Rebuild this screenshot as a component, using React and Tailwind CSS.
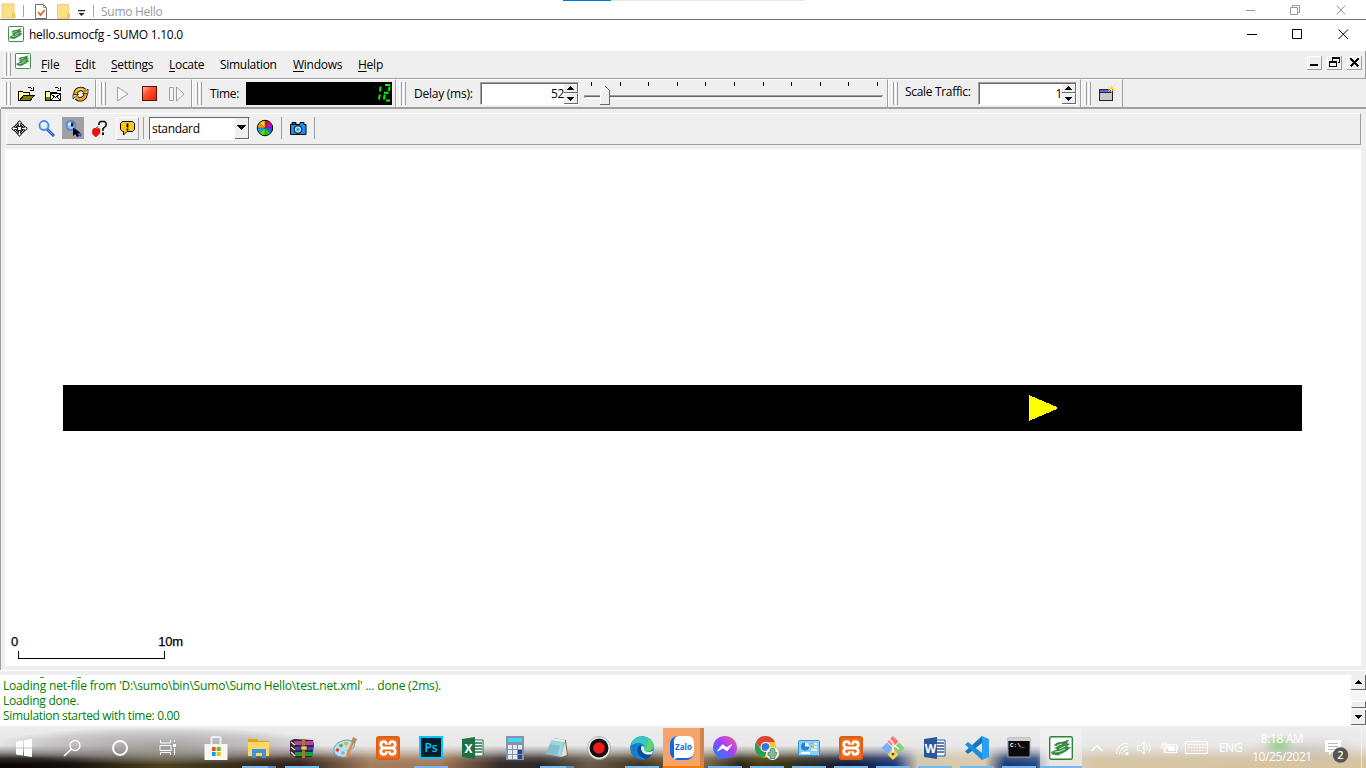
import React from "react";

function Grip() {
  return (
    <div className="flex shrink-0 gap-px">
      <div className="h-[23px] w-[3px] border-r border-l border-r-[#a0a0a0] border-l-white" />
      <div className="h-[23px] w-[3px] border-r border-l border-r-[#a0a0a0] border-l-white" />
    </div>
  );
}

function SumoIcon({ size = 16, className = "" }) {
  return (
    <svg width={size} height={size} viewBox="0 0 24 24" className={`shrink-0 ${className}`}>
      <rect x="0.7" y="0.7" width="22.6" height="22.6" rx="1.5" fill="#fff" stroke="#2c8236" strokeWidth="1.4" />
      <path d="M4.500 9.500 8 6.500l5.500-.8L20.500 3.500 18 7.300l3.200.4L18 10.500l4 1-5 4L9 19.500l-6-1L2 16l6.500-2.800L5 12l4-1.700Z" fill="#388c40" />
      <path d="M8 9.500l5-1.500M10.500 12.800l6-2.800M6 16l4-.5 6-2.500" stroke="#e4f2e4" strokeWidth="0.900" fill="none" />
    </svg>
  );
}

function Tri({ down }) {
  return (
    <svg width="7" height="4" viewBox="0 0 7 4" shapeRendering="crispEdges">
      <path d={down ? "M0 0h7v1H0zM1 1h5v1H1zM2 2h3v1H2zM3 3h1v1H3z" : "M3 0h1v1H3zM2 1h3v1H2zM1 2h5v1H1zM0 3h7v1H0z"} fill="#000" />
    </svg>
  );
}

function Spinner({ value }) {
  return (
    <div className="flex h-[23px] w-[99px] shrink-0 border-t border-l border-r border-b border-t-[#a0a0a0] border-l-[#a0a0a0] border-r-white border-b-white">
      <div className="flex flex-1 border-t border-l border-t-[#696969] border-l-[#696969] bg-white">
        <div className="flex flex-1 items-center justify-end leading-none">
          <span className="tracking-[-0.4px]">{value}</span>
        </div>
        <div className="flex w-[14px] flex-col bg-[#efefef]">
          <div className="flex h-[9px] items-center justify-center border-r border-b border-[#696969]"><Tri /></div>
          <div className="flex flex-1 items-center justify-center border-t border-r border-b border-t-white border-r-[#696969] border-b-[#696969]"><Tri down /></div>
        </div>
      </div>
    </div>
  );
}

function Cell({ className, children }) {
  return (
    <div className={`flex h-[28px] shrink-0 items-center border-t border-r border-l border-t-white border-r-[#a0a0a0] border-l-white pl-[2px] ${className}`}>
      <Grip />
      {children}
    </div>
  );
}

function FolderIcon({ net }) {
  return (
    <svg width="17" height="16" viewBox="0 0 17 16" shapeRendering="crispEdges" className="shrink-0">
      <path d="M.500 5.500h4l1 1h6v8H.500z" fill="#ffff70" stroke="#000" />
      <path d="M2 7h2v1H2zM5 8h2v1H5zM3 9h2v1H3z" fill="#fff" />
      {net ? (
        <>
          <path d="M1 11h4v3H1z" fill="#808000" />
          <rect x="5.500" y="7.500" width="10" height="7" fill="#fff" stroke="#000" />
          <path d="m6 8 4.500 3.500L15 8M6 14l3-3M15 14l-3-3" stroke="#000" fill="none" />
        </>
      ) : (
        <path d="M1.500 14.500 5.500 9.500h11l-4.500 5z" fill="#808000" stroke="#000" />
      )}
      <path d="M9.500 2.500q2-3 5 1M12 4.500h3.500V1" fill="none" stroke="#000" />
    </svg>
  );
}

function ReloadIcon() {
  return (
    <svg width="17" height="16" viewBox="0 0 17 16" className="shrink-0">
      <g fill="none">
        <path d="M3.500 8A5.300 5.300 0 0 1 12.500 4.500M13.500 8A5.300 5.300 0 0 1 4.500 11.800" stroke="#000" strokeWidth="4.400" />
        <path d="M3.500 8.200A5.300 5.300 0 0 1 12.500 4.500M13.500 7.800A5.300 5.300 0 0 1 4.500 11.800" stroke="#e8a818" strokeWidth="2.800" />
      </g>
      <path d="M10.500 7.500H16V3ZM6.500 8.500H1V13Z" fill="#ffd040" stroke="#000" strokeWidth="0.700" />
      <path d="M5 4.500q3-3 6-.5" fill="none" stroke="#ffe070" strokeWidth="1" />
    </svg>
  );
}

function Magnifier({ cursor }) {
  return (
    <svg width="17" height="17" viewBox="0 0 17 17" className="shrink-0">
      <path d="m9 9 6 6" stroke="#305ccc" strokeWidth="3" strokeLinecap="square" />
      <path d="m9 9 5.500 5.500" stroke="#7098ff" strokeWidth="1" />
      <circle cx="6" cy="5.500" r="4.500" fill={cursor ? "#a8c8e0" : "#e0f0fa"} stroke="#4888ec" strokeWidth="1.800" />
      <path d="M3.500 5a3 3 0 0 1 3-2" stroke="#fff" strokeWidth="1.300" fill="none" />
      {cursor && (
        <>
          <path d="M6 2.500h2.500v4H6z" fill="#222" />
          <path d="M8 7.500v8.500l2.300-2 1.700 3 2-1-1.500-2.700H16z" fill="#000" />
        </>
      )}
    </svg>
  );
}

function PanIcon() {
  return (
    <svg width="17" height="17" viewBox="-8.5 -8.5 17 17" className="ml-[4px] shrink-0">
      {[0, 90, 180, 270].map((a) => (
        <g key={a} transform={`rotate(${a})`} fill="#fff" stroke="#000">
          <path d="M0-7.800 2.500-5H1.200v3h-2.400v-3h-1.300z" strokeWidth="1" />
          <path d="M1.800-1.800 4-4" fill="none" strokeWidth="2.300" />
          <path d="M2.200-2.200 3.700-3.700" fill="none" stroke="#fff" strokeWidth="0.700" />
        </g>
      ))}
      <circle r="1" fill="#fff" />
    </svg>
  );
}

function MenuItem({ first, rest, className, plain }) {
  return (
    <div className={`shrink-0 ${className}`}>
      <span className={plain ? "" : "underline underline-offset-2"}>{first}</span>
      {rest}
    </div>
  );
}

function TopBars() {
  return (
    <>
      <div className="flex h-[20px] border-b border-[#707070] bg-white">
        <svg width="96" height="19" viewBox="0 0 96 19" className="shrink-0">
          <path d="M2 4h12v9l1 1v4H2z" fill="#fbe08a" stroke="#e8c45c" strokeWidth="0.800" />
          <path d="M12 13h3v5h-3z" fill="#f0c95e" />
          <path d="M23.500 5v12M93.500 5v12" stroke="#a8a8a8" />
          <path d="M35.500 4.500h8l3 3v11h-11z" fill="#fff" stroke="#707070" />
          <path d="M43.500 4.500v3h3" fill="none" stroke="#909090" />
          <path d="m38 12 2.500 3 4-5" fill="none" stroke="#e86030" strokeWidth="1.800" />
          <path d="M57.500 4.500h11v9l1 1v4h-12z" fill="#fbe08a" stroke="#e8c45c" strokeWidth="0.800" />
          <path d="M67 13h3v5h-3z" fill="#f0c95e" />
          <path d="M78 10h7v1.200h-7zM78.500 13h6l-3 3z" fill="#222" />
        </svg>
        <div className="w-[467px] pt-[4px] pl-[5px] leading-[16px] tracking-[-0.28px] text-[#999]">Sumo Hello</div>
        <div className="h-px w-[48px] bg-[#0078d7]" />
        <div className="h-px w-[193px] bg-[#e5e5e5]" />
        <div className="flex-1" />
        <svg width="121" height="19" viewBox="1245 0 121 19" fill="none" stroke="#999" className="shrink-0">
          <path d="M1246 10.500h9M1290.500 7.500h7v7h-7zM1292.500 7V5.500h7v7H1298" />
          <path d="m1336.500 5.500 9 9m0-9-9 9" />
        </svg>
      </div>
      <div className="flex h-[31px] items-center bg-white pl-[8px]">
        <SumoIcon className="-mt-[3px]" />
        <div className="pb-[2px] pl-[5px] leading-[15px] tracking-[-0.25px]">hello.sumocfg - SUMO 1.10.0</div>
        <div className="flex-1" />
        <svg width="121" height="31" viewBox="1245 20 121 31" fill="none" stroke="#000" className="shrink-0">
          <path d="M1247 34.500h10M1292.500 29.500h9v9h-9z" />
          <path d="m1338.500 29.500 9.500 9.500m0-9.500-9.500 9.500" />
        </svg>
      </div>
      <div className="ml-px flex h-[28px] border-r border-b border-[#a0a0a0] bg-[#efefef] pl-[3px]">
        <div className="pt-[2px]"><Grip /></div>
        <SumoIcon className="mt-[2px] ml-[4px]" />
        <div className="flex pt-[6px] pl-[10px] leading-[16px]">
          <MenuItem className="w-[34px] tracking-[-0.1px]" first="F" rest="ile" />
          <MenuItem className="w-[36px] tracking-[-0.2px]" first="E" rest="dit" />
          <MenuItem className="w-[58px] tracking-[-0.3px]" first="S" rest="ettings" />
          <MenuItem className="w-[51px] tracking-[-0.3px]" first="L" rest="ocate" />
          <MenuItem plain className="w-[73px] tracking-[-0.3px]" first="S" rest="imulation" />
          <MenuItem className="w-[65px] tracking-[-0.25px]" first="W" rest="indows" />
          <MenuItem className="tracking-[-0.25px]" first="H" rest="elp" />
        </div>
        <div className="flex-1" />
        <svg width="56" height="17" viewBox="0 0 56 17" shapeRendering="crispEdges" className="mt-[2px] mr-[2px] shrink-0">
          <path d="M.5 16V3.500h14M20.500 16V3.500h14M40.500 16V3.500h14" fill="none" stroke="#fff" />
          <path d="M0 16.500h14.500V3M20 16.500h14.500V3M40 16.500h14.500V3" fill="none" stroke="#a0a0a0" />
          <path d="M3 11h8v2H3z" />
          <path d="M25 4h8v6h-2V9h1V6h-6v2h-1zM22 8h8v6h-8zM23 10v3h6v-3z" fillRule="evenodd" />
          <path d="m43.500 5.500 8 8m0-8-8 8" stroke="#000" strokeWidth="2.400" />
        </svg>
      </div>
    </>
  );
}

function MainToolbar() {
  const ticks = Array.from({ length: 11 }, (_, i) => Math.round(8 + i * 28.6));
  return (
    <div className="ml-px flex h-[30px] border-b-2 border-[#a0a0a0] bg-[#efefef]">
      <Cell className="w-[95px]">
        <div className="flex gap-[11px] pl-[7px]">
          <FolderIcon />
          <div className="-ml-px"><FolderIcon net /></div>
          <div className="-ml-px"><ReloadIcon /></div>
        </div>
      </Cell>
      <Cell className="w-[96px]">
        <svg width="74" height="17" viewBox="112 84 74 17" className="ml-[6px] shrink-0">
          <path d="M117.500 86v14l10.500-7z" fill="#f8f8f8" stroke="#a0a0a0" />
          <linearGradient id="stop" x1="0" y1="0" x2="1" y2="1">
            <stop offset="0" stopColor="#ffc0a8" />
            <stop offset="0.400" stopColor="#ff5030" />
            <stop offset="1" stopColor="#e82000" />
          </linearGradient>
          <rect x="142.500" y="85.500" width="14" height="14" fill="url(#stop)" stroke="#601000" />
          <path d="M169.500 86.500h4v13h-4zM176.500 86v14l7.500-7z" fill="#f4f4f4" stroke="#a0a0a0" />
        </svg>
      </Cell>
      <Cell className="w-[204px]">
        <div className="w-[44px] shrink-0 pl-[8px] whitespace-nowrap tracking-[-0.3px]">Time:</div>
        <svg width="146" height="23" viewBox="0 0 146 23" className="shrink-0">
          <path d="M0 0h146v23H0z" />
          <path d="M134.500 4.500 134 9.500M133.800 12.500 133 17.500M139 3h5M143.500 4.500 143 9M138 10.800h4.500M138.500 12.500 138 17.500M140 18.500h4" stroke="#00ff00" strokeWidth="1.900" fill="none" />
        </svg>
      </Cell>
      <Cell className="w-[492px]">
        <div className="w-[74px] shrink-0 pl-[8px] whitespace-nowrap tracking-[-0.25px]">Delay (ms):</div>
        <Spinner value="52" />
        <svg width="302" height="26" viewBox="0 0 302 26" shapeRendering="crispEdges" className="ml-[4px] shrink-0">
          {ticks.map((x) => <path key={x} d={`M${x} 1h1v4h-1z`} />)}
          <path d="M2 14h298v1H2z" fill="#a0a0a0" />
          <path d="M2 15h297v1H2z" fill="#696969" />
          <path d="M2 17h298v1H2z" fill="#fff" />
          <path d="M1 14h1v3H1z" fill="#a0a0a0" />
          <path d="M17.500 23V10l4.500-4 4 4v13z" fill="#efefef" stroke="#fff" />
          <path d="m22 5 4.500 4.500V23H17" fill="none" stroke="#696969" />
        </svg>
      </Cell>
      <Cell className="w-[193px]">
        <div className="w-[80px] shrink-0 pb-[3px] pl-[7px] whitespace-nowrap tracking-[-0.32px]">Scale Traffic:</div>
        <Spinner value="1" />
      </Cell>
      <Cell className="w-[42px]">
        <svg width="18" height="17" viewBox="0 0 18 17" className="ml-[7px] shrink-0">
          <rect x="1.500" y="4.500" width="13" height="11" fill="#c8c8c8" stroke="#222" />
          <path d="M2 5h12v2H2z" fill="#5868e8" />
          <path d="M2 7.500h12" stroke="#222" />
          <path d="m10.500 1.500 5 5m1-6-6 6m3-6v7m-3.500-3.500h7" stroke="#ffe800" strokeWidth="1" />
        </svg>
      </Cell>
    </div>
  );
}

function ViewToolbar() {
  const wheel = ["#e00040", "#c000e0", "#2060ff", "#00d820", "#60e000", "#00b0ff", "#ff9000", "#ffd800"];
  return (
    <div className="mr-[4px] ml-[5px] mt-[4px] flex h-[32px] items-center border border-t-white border-r-[#a0a0a0] border-b-[#a0a0a0] border-l-white bg-[#efefef] pb-[2px]">
      <PanIcon />
      <div className="ml-[10px]"><Magnifier /></div>
      <div className="ml-[7px] flex h-[22px] w-[22px] items-center justify-center bg-[#a0a0a0]"><Magnifier cursor /></div>
      <svg width="17" height="17" viewBox="0 0 17 17" className="ml-[7px] shrink-0">
        <path d="M8 5V3l1.500-1.500h4L15 3v3l-3 2.500V11" fill="none" stroke="#000" strokeWidth="1.500" />
        <path d="M11 12.500h2V15h-2z" />
        <path d="M2 9q2-1.500 3.500 0Q7 7.500 9 9v4l-3.500 3.500H4L1.500 14v-3z" fill="#ff0808" stroke="#700" strokeWidth="0.400" />
        <path d="M5 8.500 7 6.500" stroke="#000" />
      </svg>
      <div className="ml-[8px] flex h-[23px] w-[23px] items-center justify-center border border-t-white border-r-[#a0a0a0] border-b-[#a0a0a0] border-l-white">
        <svg width="15" height="15" viewBox="0 0 15 15">
          <path d="M2.500.500h10l2 2v6l-2 2H7L3.500 14v-3.500H2.500l-2-2v-6z" fill="#ffc61a" stroke="#000" />
          <path d="M7.500 2.500v4M7.500 7.500v2" stroke="#000" strokeWidth="1.800" />
        </svg>
      </div>
      <div className="ml-[4px] h-[22px] w-px bg-[#a0a0a0]" />
      <div className="ml-[5px] flex h-[23px] w-[101px] border border-t-[#696969] border-r-white border-b-white border-l-[#696969] bg-white">
        <div className="flex-1 pl-[2px] leading-[21px] tracking-[-0.32px]">standard</div>
        <div className="flex w-[14px] items-center justify-center border-r border-b border-[#696969] bg-[#efefef]">
          <svg width="9" height="5" viewBox="0 0 9 5" shapeRendering="crispEdges"><path d="M0 0h9L4.500 5z" /></svg>
        </div>
      </div>
      <svg width="18" height="18" viewBox="-9 -9 18 18" className="ml-[6px] shrink-0">
        {wheel.map((c, i) => (
          <path key={c} d="M0 0V-7.500A7.500 7.500 0 0 1 5.300-5.300Z" fill={c} transform={`rotate(${i * 45})`} />
        ))}
        <circle r="7.700" fill="none" stroke="#000" strokeWidth="1" />
        <path d="M-7 0H7M0-7V7M-5-5 5 5M5-5-5 5" stroke="#333" strokeWidth="0.400" />
      </svg>
      <div className="ml-[7px] h-[22px] w-px bg-[#a0a0a0]" />
      <svg width="17" height="15" viewBox="0 0 17 15" className="ml-[8px] shrink-0">
        <path d="M.500 3.500h9.500v-2h4v2h2v10H.500z" fill="#1890f0" stroke="#000" />
        <path d="M2 3V1.500h4V3" fill="#555" stroke="#000" />
        <circle cx="8" cy="8.500" r="3.800" fill="#b8e4ff" stroke="#000" />
        <circle cx="8" cy="8.500" r="1.800" fill="#38a8f0" />
      </svg>
      <div className="ml-[7px] h-[22px] w-px bg-[#a0a0a0]" />
    </div>
  );
}

function Canvas() {
  return (
    <div className="mr-[4px] ml-[4px] mt-[4px] flex h-[517px] flex-col bg-white">
      <div className="mt-[236px] mr-[59px] ml-[58px] flex h-[46px] items-center bg-black">
        <svg width="29" height="26" viewBox="0 0 29 26" shapeRendering="crispEdges" className="ml-[966px]">
          <path d="M0 0v26l28-12v-2z" fill="#ff0" />
        </svg>
      </div>
      <div className="flex-1" />
      <div className="flex w-[178px] justify-between pl-[6px] font-['Liberation_Sans'] text-[13px] leading-[14px] tracking-[-0.2px] [-webkit-text-stroke:0.25px_#000]">
        <span>0</span>
        <span>10m</span>
      </div>
      <div className="mt-[2px] mb-[7px] ml-[13px] h-[8px] w-[147px] border-r border-b border-l border-black" />
    </div>
  );
}

function Messages() {
  return (
    <div className="flex h-[51px] bg-white">
      <div className="flex h-[51px] flex-1 flex-col pl-[3px] leading-[15px] text-[#008000]">
        <div className="flex h-[3px] items-end gap-[33px] pl-[37px]">
          <div className="h-px w-[4px] bg-[#409f40]" />
          <div className="h-px w-[4px] bg-[#409f40]" />
        </div>
        <div className="tracking-[-0.18px]">{"Loading net-file from 'D:\\sumo\\bin\\Sumo\\Sumo Hello\\test.net.xml' ... done (2ms)."}</div>
        <div className="tracking-[-0.26px]">Loading done.</div>
        <div className="tracking-[-0.34px]">Simulation started with time: 0.00</div>
      </div>
      <div className="flex w-[15px] flex-col bg-[#f6f6f6]">
        <div className="flex h-[15px] items-center justify-center border-r border-b border-[#696969] bg-[#efefef]"><Tri /></div>
        <div className="h-[11px]" />
        <div className="h-[7px] border border-t-white border-r-[#696969] border-b-[#696969] border-l-white bg-[#efefef]" />
        <div className="h-[2px]" />
        <div className="flex h-[15px] items-center justify-center border-r border-b border-[#696969] bg-[#efefef]"><Tri down /></div>
      </div>
    </div>
  );
}

const Xampp = () => (
  <>
    <rect width="24" height="24" rx="3" fill="#ee6c1c" />
    <rect x="1" y="1" width="22" height="22" rx="2" fill="none" stroke="#c85210" />
    <path d="M10.300 8.800C10.600 6.500 9.500 5.700 8 5.700 4.300 5.700 3.800 9.500 6.500 11.500L7.500 12l-1 .5C3.800 14.500 4.300 18.300 8 18.300c1.500 0 2.600-.8 2.300-3.100M13.700 8.800c-.3-2.300.8-3.100 2.300-3.100 3.700 0 4.200 3.800 1.500 5.800l-1 .5 1 .5c2.700 2 2.200 5.800-1.500 5.800-1.500 0-2.600-.8-2.300-3.100M7.500 12h9" fill="none" stroke="#fff" strokeWidth="2.800" strokeLinejoin="round" />
  </>
);

const OfficeDoc = ({ color, letter }) => (
  <>
    <path d="M12 4h10v16H12z" fill="#fff" stroke={color} />
    <path d="M14 7h7M14 10h7M14 13h7M14 16h7" stroke={color} strokeWidth="1.300" />
    <path d="M1 3 14 1v22L1 21z" fill={color} />
    <text x="7.500" y="16.500" textAnchor="middle" fontSize="12" fontWeight="700" fill="#fff" fontFamily="Open Sans">{letter}</text>
  </>
);

const APPS = [
  { w: 43, art: (
    <>
      <path d="M7.500 9V2q0-1 1-1h7q1 0 1 1v7" fill="none" stroke="#eee" strokeWidth="2" />
      <path d="M.500 8h23v16H.500z" fill="#f7f7f7" />
      <path d="M8 11h3.700v4H8z" fill="#f25022" /><path d="M12.700 11h4v4h-4z" fill="#7fba00" />
      <path d="M8 16h3.700v4H8z" fill="#00a4ef" /><path d="M12.700 16h4v4h-4z" fill="#ffb900" />
    </>
  ) },
  { w: 43, run: true, multi: true, art: (
    <>
      <path d="M1 3h9l2 2h10v15H1z" fill="#e0a414" /><path d="M1 6h21v14H1z" fill="#ffd866" />
      <path d="M5 13h14v9h-4v-5H9v5H5z" fill="#3c94dc" />
    </>
  ) },
  { w: 43, run: true, art: (
    <>
      <path d="M0 5 4 3l19 1 1 5-2 12-16 1-6-4z" fill="#3a2430" />
      <path d="M4 5h19v4H5z" fill="#b8409c" /><path d="M5 11h18v3H5z" fill="#2848d8" /><path d="M5 16h18v4H5z" fill="#18a040" />
      <path d="M1 6l4 3M1 11l4 3M1 16l4 4" stroke="#ddd" strokeWidth="1.500" />
      <path d="M12 3h3v19h-3z" fill="#a87830" /><path d="M11 10h6v4h-6z" fill="#e8d070" stroke="#503010" strokeWidth=".7" />
    </>
  ) },
  { w: 43, art: (
    <>
      <path d="M1 15C0 8 8 4 15 4q8 1 6 7-1 3-5 2-2 0-1 4 0 5-7 4-6-1-7-6Z" fill="#b8e0f4" stroke="#60a0c8" />
      <circle cx="4.500" cy="14" r="1.800" fill="#e04030" /><circle cx="8" cy="9.500" r="1.800" fill="#48b848" />
      <circle cx="13" cy="7.500" r="1.900" fill="#f0b020" /><circle cx="10" cy="17" r="1.800" fill="#a0a8b0" />
      <path d="M13 22 20 6" stroke="#e88830" strokeWidth="2.300" /><path d="m18 6 2-5 4 2-2 5z" fill="#b88c60" />
    </>
  ) },
  { w: 43, art: <Xampp /> },
  { w: 43, run: true, art: (
    <>
      <rect x="1" y="1" width="22" height="21" fill="#001d2c" stroke="#00c8ff" strokeWidth="2" />
      <text x="12" y="16" textAnchor="middle" fontSize="12" fontWeight="600" fill="#00c8ff" fontFamily="Open Sans">Ps</text>
    </>
  ) },
  { w: 41, art: <OfficeDoc color="#1e7145" letter="X" /> },
  { w: 43, art: (
    <>
      <path d="M3 0h18v24H3z" fill="#8894a4" /><path d="M5 2h14v4H5z" fill="#40d8f8" />
      {[9, 14, 19].flatMap((y) => [5, 10, 15].map((x) => (
        <path key={`${x}-${y}`} d={`M${x} ${y}h4v4h-4z`} fill={x === 15 && y > 9 ? "#184890" : "#e4eaf0"} />
      )))}
    </>
  ) },
  { w: 41, run: true, multi: true, art: (
    <>
      <path d="m8 2 13 2 2 16-4 2z" fill="#806838" /><path d="M7 2l13 2-4 17L1 18z" fill="#a0d4e0" />
      <path d="M5 8l10 2-3 10L1 18z" fill="#70b0c0" opacity=".6" /><path d="M7 2l13 2-.5 2L6.500 4z" fill="#e8f0f4" />
      <path d="m16 21 4-16 2 14z" fill="#e0e4e0" />
    </>
  ) },
  { w: 43, art: (
    <>
      <circle cx="12" cy="12" r="11.500" fill="#eee" stroke="#888" strokeWidth=".6" />
      <circle cx="12" cy="12" r="9.500" fill="#111" /><circle cx="12" cy="12" r="5.800" fill="#f01818" />
    </>
  ) },
  { w: 43, run: true, art: (
    <>
      <circle cx="12" cy="12" r="11.800" fill="#167cd4" />
      <path d="M1 9C3 1 13-2 20 3c5 4 5 10 0 12-3 1-6 0-6-2 2-2-1-6-5-6-4 0-7 2-8 2Z" fill="#38c8c0" />
      <path d="M17 2c6 3 8 10 3 13-3 1-6 0-6-2 5-3 5-7 3-11Z" fill="#60d860" />
      <path d="M9 10c-4 5 0 12 7 13 3-1 5-3 6-5-5 2-10 0-11-4 0-2 0-4 1-5Z" fill="#0c4c94" />
      <path d="M11 11q1-2 3 0 1 1 0 2 0 3 5 3l4-1-1 3c-6 2-11-1-11-7Z" fill="#e8f0f0" />
    </>
  ) },
  { w: 41, zalo: true, art: (
    <>
      <rect width="24" height="24" rx="8" fill="#0868e8" />
      <path d="M9 0h9q6 0 6 7v8q0 7-7 7H7q-3 1.500-4 1 2-2 1-5V8q-1-8 5-8Z" fill="#fff" />
      <text x="13.500" y="14" textAnchor="middle" fontSize="8" fontWeight="700" fill="#1068e8" fontFamily="Open Sans">Zalo</text>
    </>
  ) },
  { w: 42, run: true, art: (
    <>
      <linearGradient id="msg" x1="0" y1="1" x2="1" y2="0">
        <stop offset="0" stopColor="#0090ff" /><stop offset=".55" stopColor="#a040ff" /><stop offset="1" stopColor="#ff6080" />
      </linearGradient>
      <path d="M12 0c7 0 12 5 12 11.500S19 22.500 12 22.500q-2 0-4-.5l-4 2v-4Q0 17 0 11.500C0 5 5 0 12 0Z" fill="url(#msg)" />
      <path d="m4.500 15 5-6.500 4 3 5.500-3-5 6.500-4-3z" fill="#fff" stroke="#fff" strokeWidth=".8" />
    </>
  ) },
  { w: 42, run: true, art: (
    <>
      <circle cx="10.500" cy="11" r="10.500" fill="#f8c820" />
      <path d="M1 6a10.500 10.500 0 0 1 19 0h-9l-4 8z" fill="#e04434" />
      <path d="M1 6l6 9 5 1-3 5.500A10.500 10.500 0 0 1 1 6Z" fill="#28a050" />
      <circle cx="10.500" cy="11" r="5" fill="#fff" /><circle cx="10.500" cy="11" r="4" fill="#3878e0" />
      <circle cx="17.500" cy="17.500" r="6.500" fill="#f2f2f2" />
      <path d="M15 15q0-3 2.500-3t2.500 3v1.500h2l-1 3h-1v3h-5v-3h-2v-3h2z" fill="#80b898" stroke="#488060" strokeWidth=".7" />
    </>
  ) },
  { w: 42, run: true, art: (
    <>
      <rect x="1.500" y="4.500" width="21" height="15" rx="1" fill="#88d0f8" stroke="#3890c8" />
      <circle cx="8" cy="10.500" r="4" fill="#2880d0" /><path d="M8 10.500V6.500a4 4 0 0 1 4 4z" fill="#fff" />
      <path d="M14 7h6v1.500h-6zM14 10h6v1.500h-6zM14 13h6v1.500h-6zM4 16h9v2H4z" fill="#fff" /><path d="M14 7h3v1.500h-3zM14 10h3v1.500h-3z" fill="#f0a020" />
    </>
  ) },
  { w: 42, run: true, art: <Xampp /> },
  { w: 42, run: true, art: (
    <>
      <path d="m12 0 5.500 5.500L12 11 6.500 5.500z" fill="#f87878" /><path d="m6 6.500 5.500 5.500L6 17.500.500 12z" fill="#78b0f8" />
      <path d="m18 6.500 5.500 5.500-5.500 5.500-5.500-5.500z" fill="#88d070" /><path d="m12 13 5.500 5.500L12 24l-5.500-5.500z" fill="#f8d850" />
      <path d="m8 3 4 4v10M13 9l5 4" fill="none" stroke="#fff" strokeWidth="1.300" /><circle cx="12" cy="18" r="1.500" fill="#605040" />
    </>
  ) },
  { w: 42, run: true, art: <OfficeDoc color="#2b579a" letter="W" /> },
  { w: 42, run: true, art: (
    <>
      <path d="M17 0v7L3 18l-3-2.500z" fill="#1478c0" />
      <path d="M0 8.500 3 6l14 11v7z" fill="#1c8cdc" />
      <path d="m17 0 7 3v18l-7 3z" fill="#28a0f0" />
    </>
  ) },
  { w: 42, run: true, art: (
    <>
      <path d="M1 2h22v19H1z" fill="#0a0a0a" stroke="#999" /><path d="M1 2h22v3H1z" fill="#d0d0d0" />
      <text x="3" y="11" fontSize="6" fontWeight="700" fill="#fff" fontFamily="Liberation Mono">C:\_</text>
    </>
  ) },
  { w: 42, active: true },
];

function Taskbar() {
  return (
    <div className="relative h-[42px] overflow-hidden bg-[#efefef]">
      <div className="absolute inset-x-0 top-[2px] bottom-0 bg-[linear-gradient(90deg,#0c0707_0px,#15100c_70px,#4a421e_160px,#3a321c_220px,#332018_300px,#a07e60_370px,#a87858_440px,#352c28_500px,#2c2828_540px,#6a5a4c_590px,#40341e_640px,#8c7050_700px,#2c2418_740px,#463c0c_760px,#141c38_850px,#1c3878_895px,#d4c8b0_918px,#dccba8_985px,#1a3878_1005px,#284880_1036px,#d8d4cc_1050px,#d8c6a4_1100px,#d6c4a0_1366px)]" />
      <div className="absolute inset-x-0 top-[2px] bottom-0 bg-[linear-gradient(180deg,#ececec_0%,#e8e8e8_44%,rgba(226,224,222,0.62)_62%,rgba(210,205,200,0.18)_76%,rgba(200,190,180,0)_90%)]" />
      <div className="absolute top-[2px] left-0 h-[36px] w-[320px] bg-[radial-gradient(ellipse_at_center,rgba(120,115,115,0.6)_0%,rgba(150,145,145,0.4)_50%,rgba(220,220,220,0)_75%)]" />
      <div className="absolute top-[10px] left-[1240px] h-[26px] w-[126px] bg-[radial-gradient(ellipse_at_center,rgba(160,150,140,0.3)_0%,rgba(220,220,220,0)_75%)]" />
      <div className="absolute top-[8px] left-[1262px] h-[22px] w-[34px] bg-[radial-gradient(ellipse_at_center,rgba(120,205,110,0.7)_0%,rgba(180,220,170,0)_70%)]" />
      <div className="relative flex h-[42px] items-stretch pt-[2px]">
        <svg width="194" height="40" viewBox="0 0 194 40" fill="none" stroke="#fff" className="shrink-0">
          <path d="M16 13.500 23 12.500v7h-7zM24 12.300l8-1.300v8.500h-8zM16 20.500h7v7l-7-1zM24 20.500h8V29l-8-1.200z" fill="#fff" stroke="none" />
          <circle cx="75" cy="17.500" r="5" strokeWidth="1.300" /><path d="m71.500 21-7.500 7" strokeWidth="1.400" />
          <circle cx="120" cy="20" r="7" strokeWidth="1.900" />
          <path d="M160.500 12v3h10v-3M160 17.500h11v5h-11zM160.500 27v-2.500h10V27M174.500 12v2M174.500 20v7" />
          <path d="M173 16h3v3h-3z" fill="#fff" stroke="none" />
        </svg>
        {APPS.map((app, i) => (
          <div
            key={i}
            className={`flex h-[40px] shrink-0 flex-col items-center pt-[8px] ${app.zalo ? "border-r-4 border-[#cf8550] bg-[#f5a56c]" : ""} ${app.active ? "bg-[#f4f4f4]/60" : ""}`}
            style={{ width: app.w }}
          >
            {app.active ? <SumoIcon size={24} /> : (
              <svg width="24" height="24" viewBox="0 0 24 24" className="shrink-0">{app.art}</svg>
            )}
            <div className="flex-1" />
            {app.zalo && <div className="-mr-1 h-[2px] w-[41px] bg-[#ff7800]" />}
            {app.active && <div className="h-[2px] w-[42px] bg-[#76b9ed]" />}
            {app.run && (
              <div className="flex h-[2px] w-[34px] justify-end bg-[#76b9ed]">
                {app.multi && <div className="w-[8px] bg-[#5a8cb8]" />}
              </div>
            )}
          </div>
        ))}
        <svg width="133" height="40" viewBox="1082 728 133 40" fill="none" stroke="#fff" className="shrink-0">
          <path d="m1091.500 751 5.500-5.500 5.500 5.500" strokeWidth="1.300" />
          <path d="M1116.500 754a11 11 0 0 1 11.500-11M1119.500 754.500a8 8 0 0 1 8.500-8M1122.500 754.500a5 5 0 0 1 5.500-5" />
          <circle cx="1127" cy="753.500" r="1.500" fill="#fff" stroke="none" />
          <path d="M1137.500 745.500h3l3.500-3.500v12l-3.500-3.500h-3zM1146.500 745.500q2 2.500 0 5M1149 743.500q3 4.500 0 9" />
          <path d="M1165.500 744.500h11v8h-11zM1177.500 747v3M1163 742v3M1166 742v3M1161.500 745h6v3h-6zM1164 748v5" />
          <path d="M1168 746h7v5h-7z" fill="#fff" stroke="none" />
          <path d="M1185.500 741.500h22v12h-22z" />
          <path d="M1188 744.500h18M1188 747.500h18M1191 750.500h12" strokeDasharray="1.500 1.200" />
        </svg>
        <div className="w-[37px] shrink-0 pt-[12px] pl-[4px] leading-[16px] tracking-[-0.4px] text-white">ENG</div>
        <div className="flex w-[60px] shrink-0 flex-col items-center pt-[3px] leading-[16px] tracking-[-0.4px] whitespace-nowrap text-white">
          <div>8:18 AM</div>
          <div className="leading-[19px]">10/25/2021</div>
        </div>
        <svg width="54" height="40" viewBox="1312 728 54 40" className="shrink-0">
          <path d="M1325 740h16v12h-9l-3 3v-3h-4z" fill="#fff" />
          <path d="M1328 743.500h10M1328 746.500h10M1328 749.500h6" stroke="#bbb" />
          <circle cx="1340.500" cy="755" r="7.700" fill="#555" />
          <text x="1340.500" y="759" textAnchor="middle" fontSize="11" fontWeight="600" fill="#fff" fontFamily="Open Sans">2</text>
          <path d="M1361.500 728v40" stroke="#fff" strokeOpacity=".6" />
        </svg>
      </div>
    </div>
  );
}

export default function App() {
  return (
    <div className="h-[768px] w-[1366px] overflow-hidden bg-[#efefef] font-['Open_Sans','Noto_Sans',sans-serif] text-[12px] text-black">
      <TopBars />
      <MainToolbar />
      <div className="mr-[1px] flex h-[561px] flex-col border-l border-[#a0a0a0]">
        <ViewToolbar />
        <Canvas />
      </div>
      <div className="h-px bg-white" />
      <div className="h-[4px]" />
      <Messages />
      <Taskbar />
    </div>
  );
}
